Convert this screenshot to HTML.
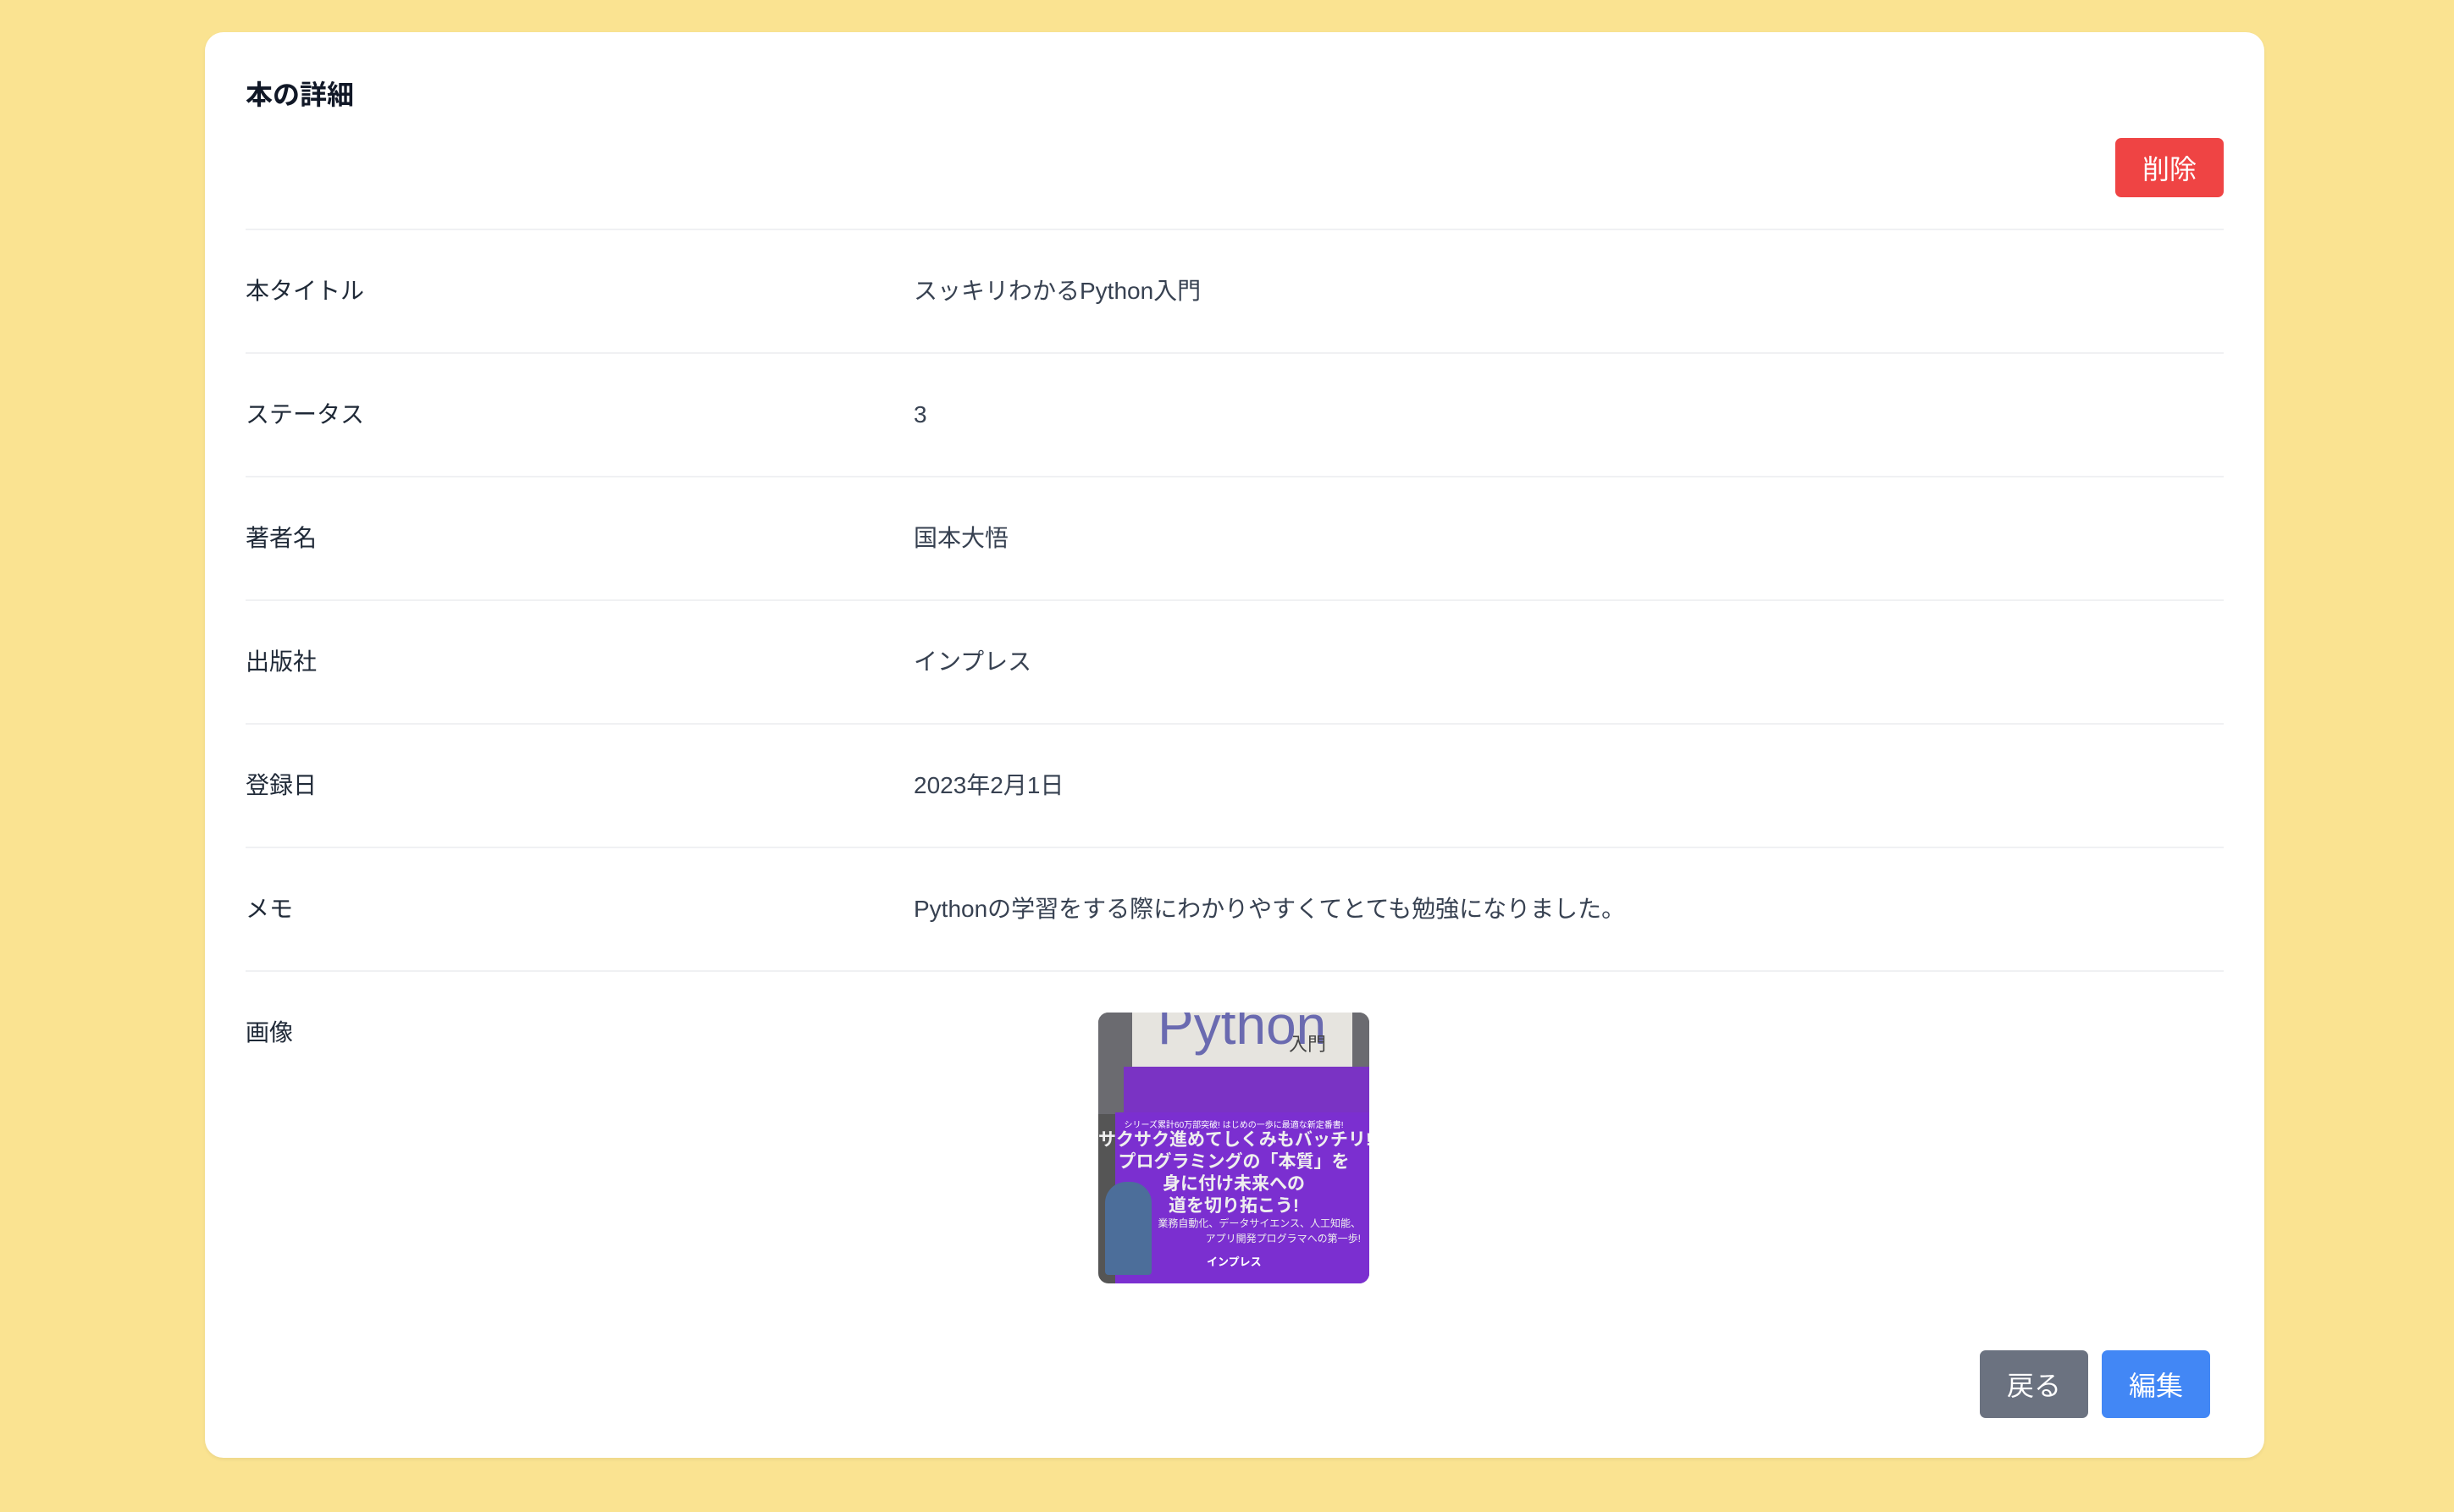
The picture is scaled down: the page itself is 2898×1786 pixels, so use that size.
<!DOCTYPE html>
<html><head><meta charset="utf-8"><style>
*{margin:0;padding:0;box-sizing:border-box}
body{width:2898px;height:1786px;background:#fae391;font-family:"Liberation Sans","Noto Sans CJK JP",sans-serif;position:relative;overflow:hidden}
.card{position:absolute;left:242px;top:38px;width:2432px;height:1684px;background:#fff;border-radius:22px;box-shadow:0 2px 4px rgba(0,0,0,.06)}
.title{position:absolute;left:290px;top:87px;font-size:32px;font-weight:bold;color:#111827}
.btn{position:absolute;color:#fff;font-size:32px;display:flex;align-items:center;justify-content:center;border-radius:7px}
.line{position:absolute;left:290px;width:2336px;height:2px;background:#f0f1f3}
.lab,.val{position:absolute;font-size:28px;color:#1f2937;line-height:40px}
.val{left:1079px;color:#374151}
.lab{left:290px}
.im div{white-space:nowrap}
</style></head><body>
<div class="card"></div>
<div class="title">本の詳細</div>
<div class="btn" style="left:2498px;top:163px;width:128px;height:70px;background:#ef4444">削除</div>
<div class="line" style="top:270px"></div>
<div class="line" style="top:416px"></div>
<div class="line" style="top:562px"></div>
<div class="line" style="top:708px"></div>
<div class="line" style="top:854px"></div>
<div class="line" style="top:1000px"></div>
<div class="line" style="top:1146px"></div>
<div class="lab" style="top:324px">本タイトル</div><div class="val" style="top:324px">スッキリわかるPython入門</div>
<div class="lab" style="top:470px">ステータス</div><div class="val" style="top:470px">3</div>
<div class="lab" style="top:616px">著者名</div><div class="val" style="top:616px">国本大悟</div>
<div class="lab" style="top:762px">出版社</div><div class="val" style="top:762px">インプレス</div>
<div class="lab" style="top:908px">登録日</div><div class="val" style="top:908px">2023年2月1日</div>
<div class="lab" style="top:1054px">メモ</div><div class="val" style="top:1054px">Pythonの学習をする際にわかりやすくてとても勉強になりました。</div>
<div class="lab" style="top:1200px">画像</div>
<div class="im" style="position:absolute;left:1297px;top:1196px;width:320px;height:320px;border-radius:12px;overflow:hidden;background:#555">
  <div style="position:absolute;left:0;top:0;width:320px;height:120px;background:#6b6b70"></div>
  <div style="position:absolute;left:40px;top:0;width:260px;height:64px;background:#e6e4df"></div>
  <div style="position:absolute;left:70px;top:-22px;font-size:64px;color:#6a6ab0">Python</div>
  <div style="position:absolute;left:225px;top:20px;font-size:22px;color:#444">入門</div>
  <div style="position:absolute;left:30px;top:64px;width:290px;height:256px;background:#7a33c4"></div>
  <div style="position:absolute;left:20px;top:118px;width:300px;height:202px;background:#7b2fd0"></div>
  <div style="position:absolute;left:0;top:124px;width:320px;font-size:10px;color:#fff;text-align:center">シリーズ累計60万部突破! はじめの一歩に最適な新定番書!</div>
  <div style="position:absolute;left:0;top:138px;width:320px;font-size:21px;font-weight:bold;color:#eee;line-height:26px;text-align:center">サクサク進めてしくみもバッチリ!<br>プログラミングの「本質」を<br>身に付け未来への<br>道を切り拓こう!</div>
  <div style="position:absolute;left:70px;top:240px;width:240px;font-size:12px;color:#eee;line-height:18px;text-align:right">業務自動化、データサイエンス、人工知能、<br>アプリ開発プログラマへの第一歩!</div>
  <div style="position:absolute;left:128px;top:284px;font-size:13px;font-weight:bold;color:#fff">インプレス</div>
  <div style="position:absolute;left:8px;top:200px;width:55px;height:110px;background:#4c6e9a;border-radius:25px 25px 4px 4px"></div>
</div>
<div class="btn" style="left:2338px;top:1595px;width:128px;height:80px;background:#6b7280">戻る</div>
<div class="btn" style="left:2482px;top:1595px;width:128px;height:80px;background:#4287f5">編集</div>
</body></html>
